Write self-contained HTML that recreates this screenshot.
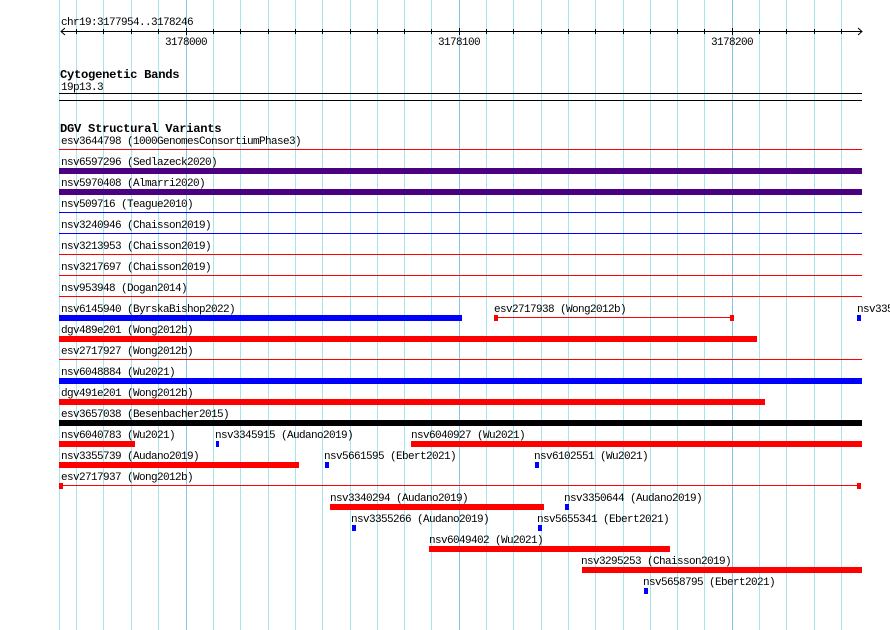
<!DOCTYPE html>
<html><head><meta charset="utf-8"><style>
html,body{margin:0;padding:0;background:#fff;width:890px;height:630px;overflow:hidden}
svg{display:block}
text{font-family:"Liberation Mono",monospace;font-size:11px;letter-spacing:-0.6px;fill:#000}
.b{font-weight:bold;font-size:12.2px;letter-spacing:-0.3px}
</style></head><body>
<svg width="890" height="630" viewBox="0 0 890 630" xmlns="http://www.w3.org/2000/svg">
<g id="grid" stroke="#a6e4ee" stroke-width="1">
<line x1="59.5" y1="0" x2="59.5" y2="630"/>
<line x1="76.5" y1="0" x2="76.5" y2="630"/><line x1="103.5" y1="0" x2="103.5" y2="630"/><line x1="131.5" y1="0" x2="131.5" y2="630"/><line x1="158.5" y1="0" x2="158.5" y2="630"/>
<line x1="186.5" y1="0" x2="186.5" y2="630" stroke="#86c8e4"/>
<line x1="213.5" y1="0" x2="213.5" y2="630"/><line x1="240.5" y1="0" x2="240.5" y2="630"/><line x1="268.5" y1="0" x2="268.5" y2="630"/><line x1="295.5" y1="0" x2="295.5" y2="630"/><line x1="322.5" y1="0" x2="322.5" y2="630"/><line x1="350.5" y1="0" x2="350.5" y2="630"/><line x1="377.5" y1="0" x2="377.5" y2="630"/><line x1="404.5" y1="0" x2="404.5" y2="630"/><line x1="431.5" y1="0" x2="431.5" y2="630"/>
<line x1="459.5" y1="0" x2="459.5" y2="630" stroke="#86c8e4"/>
<line x1="486.5" y1="0" x2="486.5" y2="630"/><line x1="513.5" y1="0" x2="513.5" y2="630"/><line x1="541.5" y1="0" x2="541.5" y2="630"/><line x1="568.5" y1="0" x2="568.5" y2="630"/><line x1="595.5" y1="0" x2="595.5" y2="630"/><line x1="623.5" y1="0" x2="623.5" y2="630"/><line x1="650.5" y1="0" x2="650.5" y2="630"/><line x1="677.5" y1="0" x2="677.5" y2="630"/><line x1="704.5" y1="0" x2="704.5" y2="630"/>
<line x1="732.5" y1="0" x2="732.5" y2="630" stroke="#86c8e4"/>
<line x1="759.5" y1="0" x2="759.5" y2="630"/><line x1="786.5" y1="0" x2="786.5" y2="630"/><line x1="814.5" y1="0" x2="814.5" y2="630"/><line x1="841.5" y1="0" x2="841.5" y2="630"/>
</g>
<text x="61" y="25">chr19:3177954..3178246</text>
<g stroke="#000" stroke-width="1">
<line x1="61" y1="31.5" x2="862" y2="31.5"/>
<polyline points="65,28 61,31.5 65,35" fill="none"/>
<polyline points="858,28 862,31.5 858,35" fill="none"/>
<g>
<line x1="76.5" y1="29" x2="76.5" y2="34"/><line x1="103.5" y1="29" x2="103.5" y2="34"/><line x1="131.5" y1="29" x2="131.5" y2="34"/><line x1="158.5" y1="29" x2="158.5" y2="34"/><line x1="186.5" y1="28" x2="186.5" y2="35"/>
<line x1="213.5" y1="29" x2="213.5" y2="34"/><line x1="240.5" y1="29" x2="240.5" y2="34"/><line x1="268.5" y1="29" x2="268.5" y2="34"/><line x1="295.5" y1="29" x2="295.5" y2="34"/><line x1="322.5" y1="29" x2="322.5" y2="34"/><line x1="350.5" y1="29" x2="350.5" y2="34"/><line x1="377.5" y1="29" x2="377.5" y2="34"/><line x1="404.5" y1="29" x2="404.5" y2="34"/><line x1="431.5" y1="29" x2="431.5" y2="34"/><line x1="459.5" y1="28" x2="459.5" y2="35"/>
<line x1="486.5" y1="29" x2="486.5" y2="34"/><line x1="513.5" y1="29" x2="513.5" y2="34"/><line x1="541.5" y1="29" x2="541.5" y2="34"/><line x1="568.5" y1="29" x2="568.5" y2="34"/><line x1="595.5" y1="29" x2="595.5" y2="34"/><line x1="623.5" y1="29" x2="623.5" y2="34"/><line x1="650.5" y1="29" x2="650.5" y2="34"/><line x1="677.5" y1="29" x2="677.5" y2="34"/><line x1="704.5" y1="29" x2="704.5" y2="34"/><line x1="732.5" y1="28" x2="732.5" y2="35"/>
<line x1="759.5" y1="29" x2="759.5" y2="34"/><line x1="786.5" y1="29" x2="786.5" y2="34"/><line x1="814.5" y1="29" x2="814.5" y2="34"/><line x1="841.5" y1="29" x2="841.5" y2="34"/>
</g></g>
<text x="165" y="45">3178000</text>
<text x="438" y="45">3178100</text>
<text x="711" y="45">3178200</text>
<text class="b" x="60" y="78">Cytogenetic Bands</text>
<text x="61" y="90">19p13.3</text>
<rect x="59" y="93" width="803" height="1" fill="#000"/>
<rect x="59" y="100" width="803" height="1" fill="#000"/>
<text class="b" x="60" y="132">DGV Structural Variants</text>
<text x="61" y="144">esv3644798 (1000GenomesConsortiumPhase3)</text>
<rect x="59" y="149" width="803" height="1" fill="#f00"/>
<text x="61" y="165">nsv6597296 (Sedlazeck2020)</text>
<rect x="59" y="168" width="803" height="6" fill="#4b0082"/>
<text x="61" y="186">nsv5970408 (Almarri2020)</text>
<rect x="59" y="189" width="803" height="6" fill="#4b0082"/>
<text x="61" y="207">nsv509716 (Teague2010)</text>
<rect x="59" y="212" width="803" height="1" fill="#00f"/>
<text x="61" y="228">nsv3240946 (Chaisson2019)</text>
<rect x="59" y="233" width="803" height="1" fill="#00f"/>
<text x="61" y="249">nsv3213953 (Chaisson2019)</text>
<rect x="59" y="254" width="803" height="1" fill="#f00"/>
<text x="61" y="270">nsv3217697 (Chaisson2019)</text>
<rect x="59" y="275" width="803" height="1" fill="#f00"/>
<text x="61" y="291">nsv953948 (Dogan2014)</text>
<rect x="59" y="296" width="803" height="1" fill="#f00"/>
<text x="61" y="312">nsv6145940 (ByrskaBishop2022)</text>
<rect x="59" y="315" width="403" height="6" fill="#00f"/>
<text x="494" y="312">esv2717938 (Wong2012b)</text>
<rect x="494" y="315" width="4" height="6" fill="#f00"/>
<rect x="498" y="317" width="232" height="1" fill="#f00"/>
<rect x="730" y="315" width="4" height="6" fill="#f00"/>
<text x="857" y="312">nsv3350644</text>
<rect x="857" y="315" width="4" height="6" fill="#00f"/>
<text x="61" y="333">dgv489e201 (Wong2012b)</text>
<rect x="59" y="336" width="698" height="6" fill="#f00"/>
<text x="61" y="354">esv2717927 (Wong2012b)</text>
<rect x="59" y="359" width="803" height="1" fill="#f00"/>
<text x="61" y="375">nsv6048884 (Wu2021)</text>
<rect x="59" y="378" width="803" height="6" fill="#00f"/>
<text x="61" y="396">dgv491e201 (Wong2012b)</text>
<rect x="59" y="399" width="706" height="6" fill="#f00"/>
<text x="61" y="417">esv3657038 (Besenbacher2015)</text>
<rect x="59" y="420" width="803" height="6" fill="#000"/>
<text x="61" y="438">nsv6040783 (Wu2021)</text>
<rect x="59" y="441" width="76" height="6" fill="#f00"/>
<text x="215" y="438">nsv3345915 (Audano2019)</text>
<rect x="216" y="441" width="3" height="6" fill="#00f"/>
<text x="411" y="438">nsv6040927 (Wu2021)</text>
<rect x="411" y="441" width="451" height="6" fill="#f00"/>
<text x="61" y="459">nsv3355739 (Audano2019)</text>
<rect x="59" y="462" width="240" height="6" fill="#f00"/>
<text x="324" y="459">nsv5661595 (Ebert2021)</text>
<rect x="325" y="462" width="4" height="6" fill="#00f"/>
<text x="534" y="459">nsv6102551 (Wu2021)</text>
<rect x="535" y="462" width="4" height="6" fill="#00f"/>
<text x="61" y="480">esv2717937 (Wong2012b)</text>
<rect x="59" y="483" width="4" height="6" fill="#f00"/>
<rect x="63" y="485" width="795" height="1" fill="#f00"/>
<rect x="857" y="483" width="4" height="6" fill="#f00"/>
<text x="330" y="501">nsv3340294 (Audano2019)</text>
<rect x="330" y="504" width="214" height="6" fill="#f00"/>
<text x="564" y="501">nsv3350644 (Audano2019)</text>
<rect x="565" y="504" width="4" height="6" fill="#00f"/>
<text x="351" y="522">nsv3355266 (Audano2019)</text>
<rect x="352" y="525" width="4" height="6" fill="#00f"/>
<text x="537" y="522">nsv5655341 (Ebert2021)</text>
<rect x="538" y="525" width="4" height="6" fill="#00f"/>
<text x="429" y="543">nsv6049402 (Wu2021)</text>
<rect x="429" y="546" width="241" height="6" fill="#f00"/>
<text x="581" y="564">nsv3295253 (Chaisson2019)</text>
<rect x="582" y="567" width="280" height="6" fill="#f00"/>
<text x="643" y="585">nsv5658795 (Ebert2021)</text>
<rect x="644" y="588" width="4" height="6" fill="#00f"/>
</svg>
</body></html>
